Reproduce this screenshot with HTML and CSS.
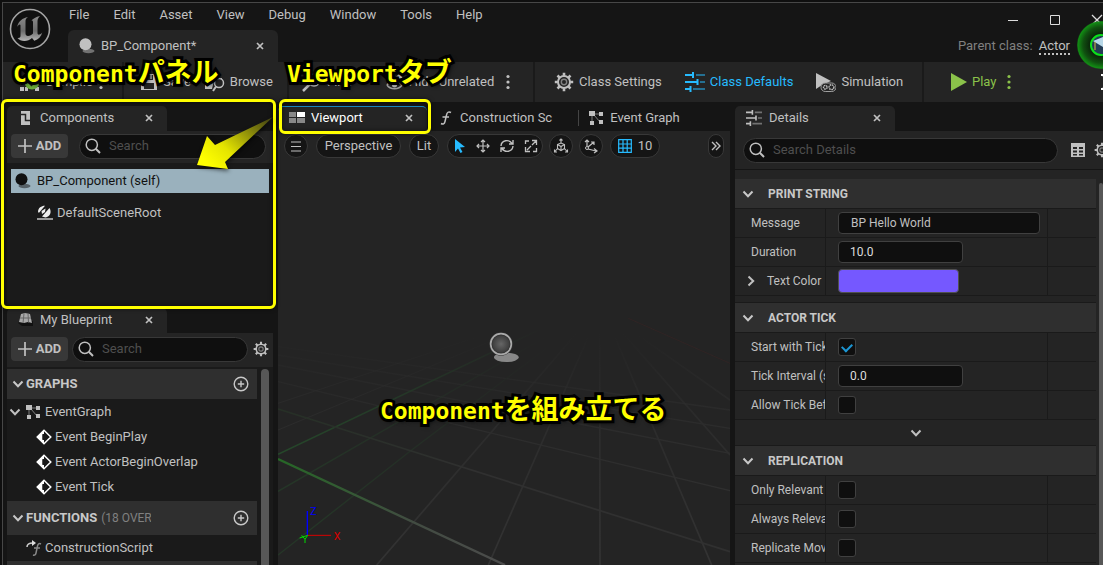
FILE: index.html
```html
<!DOCTYPE html>
<html lang="en">
<head>
<meta charset="utf-8">
<title>BP_Component</title>
<link rel="stylesheet" href="styles.css">
</head>
<body>
<svg class="defs" aria-hidden="true">
  <defs>
    <symbol id="gear" viewBox="0 0 20 20"><g fill="none" stroke="currentColor"><circle cx="10" cy="10" r="6" stroke-width="2"/><circle cx="10" cy="10" r="2.7" stroke-width="1.4" opacity=".6"/><path stroke-width="2.6" d="M10 .8v3M10 16.2v3M.8 10h3M16.2 10h3M3.5 3.5l2.1 2.1M14.4 14.4l2.1 2.1M3.5 16.500l2.1-2.1M14.4 5.600l2.1-2.1"/></g></symbol>
    <symbol id="sliders" viewBox="0 0 20 20"><g stroke="currentColor" stroke-width="2" fill="none"><path d="M0 3h8M8 0v6M0 10h12M12.500 7v6M0 17h5M5.500 14v6"/><path opacity=".5" d="M11 3h9M15 10h5M8 17h12"/></g></symbol>
    <symbol id="graph" viewBox="0 0 16 16"><path fill="currentColor" d="M1 1h6v5H1zM11 2h4v4h-4zM11 10h4v4h-4zM2 11h4v4H2z"/><path fill="none" stroke="currentColor" opacity=".6" d="M6 4h6M4 5v7M6 5l6 7"/></symbol>
    <symbol id="search" viewBox="0 0 16 16"><g fill="none" stroke="currentColor" stroke-width="1.5"><circle cx="6.800" cy="6.800" r="5.600"/><path stroke-width="2" d="M10.800 10.800l4.200 4.200"/></g></symbol>
    <symbol id="close" viewBox="0 0 8 8"><path fill="none" stroke="currentColor" stroke-width="1.700" d="M1 1l6 6M7 1L1 7"/></symbol>
    <symbol id="down" viewBox="0 0 12 12"><path fill="none" stroke="currentColor" stroke-width="2" d="M1.500 3.500L6 8.200l4.500-4.700"/></symbol>
    <symbol id="plus" viewBox="0 0 14 14"><path fill="none" stroke="currentColor" stroke-width="1.700" d="M7 0v14M0 7h14"/></symbol>
    <symbol id="pluscircle" viewBox="0 0 16 16"><g fill="none" stroke="currentColor" stroke-width="1.400"><circle cx="8" cy="8" r="6.800"/><path d="M8 4.800v6.400M4.800 8h6.400"/></g></symbol>
    <symbol id="sphere" viewBox="0 0 16 16"><ellipse cx="9.500" cy="13" rx="6" ry="2.200" fill="currentColor" opacity=".5"/><circle cx="6.500" cy="6.300" r="6" fill="currentColor"/></symbol>
    <symbol id="event" viewBox="0 0 16 16"><path fill="none" stroke="#fff" stroke-width="1.500" d="M8 1.200L14.800 8 8 14.800 1.200 8z"/><path fill="#fff" d="M8 1v4H6.500v6H8v4L1 8z"/><path fill="#1a1a1a" d="M6.500 5.500H8L10.500 8 8 10.500H6.500z"/></symbol>
    <symbol id="dots" viewBox="0 0 4 16"><g fill="currentColor"><circle cx="2" cy="2.500" r="1.600"/><circle cx="2" cy="8" r="1.600"/><circle cx="2" cy="13.500" r="1.600"/></g></symbol>
    <linearGradient id="ue" x1="0" y1="0" x2="0" y2="1"><stop offset="0" stop-color="#8a8a8a"/><stop offset=".6" stop-color="#6c6c6c"/><stop offset="1" stop-color="#b5b5b5"/></linearGradient>
  </defs>
</svg>

<div class="app">
  <header class="titlebar">
    <svg class="logo" viewBox="0 0 42 42"><circle cx="21" cy="21" r="19.500" fill="#101010" stroke="#a5a5a5" stroke-width="1.600"/><path fill="url(#ue)" d="M8 19c1.500-6 5.500-9 11-10-2 1.500-2.500 2.500-2.500 4v12.500c0 1.500 1 2.500 2.500 2.500 2 0 3.500-1 5-2.500V14c0-1-.8-1.800-1.800-1.300C24 10.500 27 9 31 8c-2 2-2.500 3.500-2.500 5.500V25c0 1.500 1 2 2 1.600 1.200-.5 2-1.200 2.800-2.200-1 4-4 7-8 8.300L23 30c-2 2-5 3-7.500 3-3 0-5.500-1-7-3 2 .3 3-.6 3-2.200V17.500c0-1.800-2-1.200-3.500 1.500z"/></svg>
    <div class="title-main">
      <nav class="menu" aria-label="Main menu">
        <button>File</button><button>Edit</button><button>Asset</button><button>View</button><button>Debug</button><button>Window</button><button>Tools</button><button>Help</button>
      </nav>
      <div class="asset-tab"><svg class="i16"><use href="#sphere"/></svg><span>BP_Component*</span><button class="x" aria-label="Close asset"><svg class="i8"><use href="#close"/></svg></button></div>
    </div>
    <div class="title-side">
      <div class="window-buttons">
        <button aria-label="Minimize"><svg viewBox="0 0 12 12" class="i12"><path stroke="currentColor" d="M1 6.500h10"/></svg></button>
        <button aria-label="Maximize"><svg viewBox="0 0 12 12" class="i12"><path fill="none" stroke="currentColor" d="M1.500 1.500h9v9h-9z"/></svg></button>
        <button aria-label="Close window"><svg viewBox="0 0 12 12" class="i12"><path stroke="currentColor" stroke-width="1.300" d="M1 1l10 10M11 1L1 11"/></svg></button>
      </div>
      <p class="parent">Parent class: <a href="#actor">Actor</a></p>
    </div>
  </header>

  <div class="toolbar">
    <div class="group g-compile">
      <button class="tool"><svg class="i20" viewBox="0 0 20 20"><path fill="#c0c0c0" d="M0 5h4v3H0zM0 10h4v3H0zM0 15h4v4H0zM5 15h3v4H5zM15 15h4v4h-4z"/><circle cx="12" cy="10" r="7.500" fill="#6cae3a"/><path fill="none" stroke="#182010" stroke-width="2.200" d="M8 9.500l3.500 3.500L18 6"/></svg>Compile</button>
      <button class="more" aria-label="Compile options"><svg class="idots"><use href="#dots"/></svg></button>
    </div>
    <div class="group g-save">
      <button class="tool"><svg class="i18" viewBox="0 0 18 18"><path fill="#c0c0c0" fill-rule="evenodd" d="M1 1h13l3 3v13H1zM5 2v5h8V2zM4 10v6h10v-6z"/><path fill="#888" d="M10 2h2v4h-2z"/></svg>Save</button>
      <button class="tool"><svg class="i20" viewBox="0 0 20 20"><path fill="#c0c0c0" d="M0 4h7l2 2h8v2H9l-2 9H0z"/><circle cx="14" cy="11" r="4.500" fill="#242424" stroke="#c0c0c0" stroke-width="1.500"/><path stroke="#c0c0c0" stroke-width="2" d="M11 14.500L8 19"/></svg>Browse</button>
    </div>
    <div class="group g-find">
      <button class="tool"><svg class="i20" viewBox="0 0 20 20"><circle cx="12" cy="8" r="6" fill="none" stroke="#c0c0c0" stroke-width="1.500"/><path stroke="#c0c0c0" stroke-width="2.500" d="M7.500 12.500L1 19"/></svg>Find</button>
      <div class="pair">
        <button class="tool"><svg class="i20" viewBox="0 0 20 20"><path fill="none" stroke="#a0a0a0" stroke-width="1.500" d="M3 4l5 4 8-5M3 13c3-5 12-5 15 0-3 5-12 5-15 0"/><circle cx="3" cy="4" r="2" fill="#777"/><circle cx="16" cy="4" r="2.500" fill="#c0c0c0"/><circle cx="10.500" cy="13" r="2.500" fill="#c0c0c0"/></svg>Hide Unrelated</button>
        <button class="more" aria-label="Hide options"><svg class="idots"><use href="#dots"/></svg></button>
      </div>
    </div>
    <div class="group g-class">
      <button class="tool"><svg class="i20"><use href="#gear"/></svg>Class Settings</button>
      <button class="tool active"><svg class="i20"><use href="#sliders"/></svg>Class Defaults</button>
      <button class="tool"><svg class="i20" viewBox="0 0 20 20"><path fill="#c0c0c0" d="M0 1l15 8-9 4-6 4z"/><rect x="5" y="11" width="15" height="8.500" rx="4.200" fill="#242424" stroke="#a0a0a0"/><g fill="none" stroke="#c0c0c0" stroke-width="1.400"><circle cx="9.300" cy="15.200" r="1.800" stroke-dasharray="1.500 .6"/><circle cx="15.500" cy="15.200" r="2.400" stroke-dasharray="1.500 .6"/></g></svg>Simulation</button>
    </div>
    <div class="group g-play">
      <button class="tool"><svg class="i18" viewBox="0 0 18 18"><path fill="#8bc24a" d="M2 0l16 9-16 9z"/></svg>Play</button>
      <button class="more" aria-label="Play options"><svg class="idots"><use href="#dots"/></svg></button>
    </div>
  </div>

  <main class="workspace">
    <aside class="left">
      <section class="panel components">
        <div class="tabs"><div class="tab"><svg class="i16" viewBox="0 0 16 16"><path fill="#c0c0c0" d="M3 1h9v14H3z"/><path fill="none" stroke="#242424" stroke-width="1.500" d="M3 4.500h4.500v6H12"/></svg><h2>Components</h2><button class="x" aria-label="Close Components"><svg class="i8"><use href="#close"/></svg></button></div></div>
        <div class="actions"><button class="add"><svg class="i14"><use href="#plus"/></svg>ADD</button><label class="search wide"><svg class="i16"><use href="#search"/></svg><input type="search" placeholder="Search" aria-label="Search components"></label></div>
        <ul class="tree">
          <li class="selected"><svg class="i16"><use href="#sphere"/></svg>BP_Component (self)</li>
          <li class="child"><svg class="i16" viewBox="0 0 16 16"><path fill="#999" d="M0 13h16v2H0z"/><path fill="#eee" d="M1 6.500C1.500 3 4 .8 8 .8L1.800 8zM5 11.500l7.500-8.500c2.500 4 .5 9-4 9.500z"/><path fill="#eee" d="M4.500 6l4-2.500L8 7l-3 2z"/></svg>DefaultSceneRoot</li>
        </ul>
      </section>
      <section class="panel blueprint">
        <div class="tabs"><div class="tab"><svg class="i16" viewBox="0 0 16 16"><path fill="#111" d="M0 11l3-2h12v5H4z"/><path fill="#a8a8a8" d="M3 2l4-1 5 1 2 9-4-1-4 1-5-1z"/><path stroke="#666" fill="none" d="M6 1.500L5 11M10 1.500l.5 9M2 6h11"/></svg><h2>My Blueprint</h2><button class="x" aria-label="Close My Blueprint"><svg class="i8"><use href="#close"/></svg></button></div></div>
        <div class="actions"><button class="add"><svg class="i14"><use href="#plus"/></svg>ADD</button><label class="search"><svg class="i16"><use href="#search"/></svg><input type="search" placeholder="Search" aria-label="Search blueprint"></label><button class="icon" aria-label="Blueprint settings"><svg class="i16"><use href="#gear"/></svg></button></div>
        <div class="outline">
          <div class="outline-list">
            <h3 class="graphs"><svg class="i12"><use href="#down"/></svg>GRAPHS<button class="icon" aria-label="Add graph"><svg class="i16"><use href="#pluscircle"/></svg></button></h3>
            <ul>
              <li class="root"><svg class="i12"><use href="#down"/></svg><svg class="i16"><use href="#graph"/></svg>EventGraph</li>
              <li class="leaf"><svg class="i16"><use href="#event"/></svg>Event BeginPlay</li>
              <li class="leaf"><svg class="i16"><use href="#event"/></svg>Event ActorBeginOverlap</li>
              <li class="leaf"><svg class="i16"><use href="#event"/></svg>Event Tick</li>
            </ul>
            <h3 class="functions"><svg class="i12"><use href="#down"/></svg>FUNCTIONS<span class="count">(18 OVERRIDABLE)</span><button class="icon" aria-label="Add function"><svg class="i16"><use href="#pluscircle"/></svg></button></h3>
            <ul><li class="func"><svg class="i16" viewBox="0 0 16 16"><path fill="none" stroke="#ccc" stroke-width="1.500" d="M1 7c0-3 2-4 6-4"/><path fill="#ddd" d="M6 0l4 3-4 3z"/><path fill="none" stroke="#888" stroke-width="1.500" d="M15 4c-2-1-3 0-3.500 2l-1.500 7c-.4 2-1.500 2.500-3 2M8 8h6"/></svg>ConstructionScript</li></ul>
            <h3 class="macros"></h3>
          </div>
          <div class="scroll"></div>
        </div>
      </section>
    </aside>

    <section class="center">
      <div class="tabs">
        <div class="tab current"><svg class="i16" viewBox="0 0 16 16"><path fill="#888" d="M0 2h7v5H0zM0 8h7v5H0zM8 8h8v5H8z"/><path fill="#fff" d="M8 2h8v5H8z"/></svg><h2>Viewport</h2><button class="x" aria-label="Close Viewport"><svg class="i8"><use href="#close"/></svg></button></div>
        <div class="tab idle script"><svg class="i14" viewBox="0 0 14 14"><path fill="none" stroke="currentColor" stroke-width="1.500" d="M12 1.500C9.500 0 8 1.500 7.500 4L6 10.500C5.500 13 4 13.700 2 12.500M3.500 6h6.500"/></svg><h2>Construction Sc</h2></div>
        <div class="tab idle event"><svg class="i16"><use href="#graph"/></svg><h2>Event Graph</h2></div>
      </div>
      <div class="viewport">
        <svg class="scene" viewBox="9 -507 1356 1302" preserveAspectRatio="xMidYMid slice" role="img" aria-label="3D scene">
          <defs>
            <linearGradient id="fade" gradientUnits="userSpaceOnUse" x1="0" y1="100" x2="0" y2="795"><stop offset="0" stop-color="#2c2c2c" stop-opacity="0"/><stop offset=".4" stop-color="#2c2c2c"/><stop offset="1" stop-color="#333"/></linearGradient>
            <linearGradient id="gaxis" gradientUnits="userSpaceOnUse" x1="9" y1="477" x2="690" y2="795"><stop offset="0" stop-color="#266826"/><stop offset=".6" stop-color="#424c42"/><stop offset="1" stop-color="#4c4c4c"/></linearGradient>
            <linearGradient id="gfar" gradientUnits="userSpaceOnUse" x1="9" y1="463" x2="800" y2="80"><stop offset="0" stop-color="#25482a"/><stop offset="1" stop-color="#242424"/></linearGradient>
            <linearGradient id="gcross" gradientUnits="userSpaceOnUse" x1="9" y1="327" x2="600" y2="500"><stop offset="0" stop-color="#263026"/><stop offset="1" stop-color="#303030"/></linearGradient>
            <radialGradient id="ball"><stop offset="0" stop-color="#666"/><stop offset="1" stop-color="#353535"/></radialGradient>
          </defs>
          <g fill="none" stroke="url(#fade)" stroke-width="5">
            <path d="M974 70L975 795M975 30L640 795M965 30L305 795M990 40L1310 795M1000 50L1365 465M1010 50L1365 300"/>
            <path d="M9 245L1365 572M9 195L1365 460M9 165L1365 385M9 140L1365 330" stroke-width="4"/>
            <path d="M9 310L760 60M9 390L800 60" stroke-width="3"/>
          </g>
          <g fill="none">
            <path d="M9 765L410 450 900 80" stroke="url(#gfar)" opacity=".5" stroke-width="4"/><path d="M9 574L900 60" stroke="url(#gfar)" opacity=".5" stroke-width="4"/>
            <path d="M9 463L875 50" stroke="url(#gfar)" stroke-width="5"/>
            <path d="M9 327L1365 755" stroke="url(#gcross)" stroke-width="5"/>
            <path d="M1060 55L1365 190" stroke="#302424" stroke-width="3"/>
            <path d="M9 477L690 795" stroke="url(#gaxis)" stroke-width="7"/>
          </g>
          <ellipse cx="694" cy="172" rx="37" ry="14" fill="#888"/><circle cx="678" cy="132" r="31" fill="url(#ball)" stroke="#333" stroke-width="9"/><circle cx="678" cy="132" r="31" fill="none" stroke="#aaa" stroke-width="5"/>
          <g fill="none" stroke-width="3"><path stroke="#00f" stroke-width="4" d="M97 633v73"/><path stroke="#d80000" d="M97 706h71"/><path stroke="#0d0" d="M98 706L74 714M80 706l10 12 8-12M90 718v11"/></g>
          <text class="axis z" x="106" y="646">Z</text><text class="axis x-label" x="176" y="720">X</text>
        </svg>
        <div class="view-tools">
          <button class="pill menu-btn" aria-label="Viewport menu"><svg class="i12" viewBox="0 0 12 12"><path stroke="currentColor" stroke-width="1.200" d="M1 2h10M1 6.500h10M1 11h10"/></svg></button>
          <button class="pill persp">Perspective</button>
          <button class="pill lit">Lit</button>
          <div class="pill tools">
            <button aria-label="Select"><svg class="i14" viewBox="0 0 14 14"><path fill="#26bbff" d="M3 0l10 8-5 .5 2.500 4.500-2 1L6 9.500 3 13z"/></svg></button>
            <button aria-label="Move"><svg class="i14" viewBox="0 0 14 14"><path fill="none" stroke="currentColor" stroke-width="1.200" d="M7 1v12M1 7h12M5 3l2-2 2 2M5 11l2 2 2-2M3 5L1 7l2 2M11 5l2 2-2 2"/></svg></button>
            <button aria-label="Rotate"><svg class="i14" viewBox="0 0 14 14"><path fill="none" stroke="currentColor" stroke-width="1.400" d="M1 7c.5-6 8-7 11-2.500M13 7c-.5 6-8 7-11 2.500M13 1v4H9M1 13V9h4"/></svg></button>
            <button aria-label="Scale"><svg class="i14" viewBox="0 0 14 14"><path fill="none" stroke="currentColor" stroke-width="1.300" d="M5 2H1.500v3M12.500 9v3.500H9M8 1.500h4.500V6M12 2L8 6M7 7L3 11M1.500 8v4.500H6"/></svg></button>
          </div>
          <button class="pill round coord" aria-label="Coordinate system"><svg class="i16" viewBox="0 0 16 16"><path fill="none" stroke="currentColor" stroke-width="1.100" d="M8 1v4M4.500 6.500L8 5l3.500 1.500v4L8 12.500l-3.500-2zM4.500 6.500L8 8.500l3.500-2M8 8.500v4M4.500 10.500L1.500 14M11.500 10.500l3 3.500M6.500 2.500L8 1l1.500 1.500M1.500 11.500V14H4M14.500 11.500V14H12"/></svg></button>
          <button class="pill round snap" aria-label="Surface snapping"><svg class="i16" viewBox="0 0 16 16"><path fill="none" stroke="currentColor" stroke-width="1.200" d="M4 2v6M5 9l6-5M2 4l2-2 2 2M8 4h3v3M5 11l8 2M11 10.500l3 2.500-3 2"/><circle cx="4" cy="10" r="1.500" fill="#151515" stroke="currentColor"/></svg></button>
          <button class="pill gridsnap"><svg class="i14" viewBox="0 0 14 14"><path fill="none" stroke="#26bbff" stroke-width="1.200" d="M.7.7h12.600v12.600H.7zM5 0v14M9.200 0v14M0 5h14M0 9.200h14"/></svg>10</button>
          <button class="pill expand" aria-label="More tools"><svg class="i12" viewBox="0 0 12 12"><path fill="none" stroke="currentColor" stroke-width="1.400" d="M2 2l4 4-4 4M6 2l4 4-4 4"/></svg></button>
        </div>
      </div>
    </section>

    <aside class="right">
      <div class="tabs"><div class="tab"><svg class="i16"><use href="#sliders"/></svg><h2>Details</h2><button class="x" aria-label="Close Details"><svg class="i8"><use href="#close"/></svg></button></div></div>
      <div class="details-search"><label class="search"><svg class="i16"><use href="#search"/></svg><input type="search" placeholder="Search Details" aria-label="Search Details"></label>
        <button class="icon" aria-label="Property matrix"><svg class="i14" viewBox="0 0 14 14"><path fill="#c0c0c0" fill-rule="evenodd" d="M0 0h14v14H0zM2 4v2h4V4zM8 4v2h4V4zM2 7.500v2h4v-2zM8 7.500v2h4v-2zM2 11v1.500h4V11zM8 11v1.500h4V11z"/></svg></button>
        <button class="icon" aria-label="Details settings"><svg class="i16"><use href="#gear"/></svg></button></div>
      <div class="details-body">
        <div class="props">
          <h3><svg class="i12"><use href="#down"/></svg>PRINT STRING</h3>
          <div class="row"><label for="msg">Message</label><div class="value"><input id="msg" class="text" value="BP Hello World"></div><i></i></div>
          <div class="row"><label for="dur">Duration</label><div class="value"><input id="dur" class="number" value="10.0"></div><i></i></div>
          <div class="row"><div class="name"><svg class="i12 right-arrow"><use href="#down"/></svg>Text Color</div><div class="value"><button class="swatch" aria-label="Text Color"></button></div><i></i></div>
          <div class="spacer"></div>
          <h3><svg class="i12"><use href="#down"/></svg>ACTOR TICK</h3>
          <div class="row"><label for="tick">Start with Tick Enabled</label><div class="value"><input type="checkbox" id="tick" checked></div><i></i></div>
          <div class="row"><label for="int">Tick Interval (secs)</label><div class="value"><input id="int" class="number" value="0.0"></div><i></i></div>
          <div class="row"><label for="allow">Allow Tick Before Begin Play</label><div class="value"><input type="checkbox" id="allow"></div><i></i></div>
          <button class="advanced" aria-label="Show advanced"><svg class="i12"><use href="#down"/></svg></button>
          <h3><svg class="i12"><use href="#down"/></svg>REPLICATION</h3>
          <div class="row"><label for="only">Only Relevant to Owner</label><div class="value"><input type="checkbox" id="only"></div><i></i></div>
          <div class="row"><label for="always">Always Relevant</label><div class="value"><input type="checkbox" id="always"></div><i></i></div>
          <div class="row"><label for="move">Replicate Movement</label><div class="value"><input type="checkbox" id="move"></div><i></i></div>
          <div class="row"></div>
        </div>
        <div class="scroll"></div>
      </div>
    </aside>
  </main>

  <svg class="badge" viewBox="0 0 48 48" aria-hidden="true"><defs><radialGradient id="glow"><stop offset=".45" stop-color="#0a250a"/><stop offset=".75" stop-color="#105010"/><stop offset=".96" stop-color="#128c14"/><stop offset="1" stop-color="#128c14" stop-opacity=".5"/></radialGradient></defs><circle cx="24" cy="24" r="24" fill="url(#glow)"/><circle cx="24" cy="24" r="10" fill="#243c54" stroke="#0be01b" stroke-width="2"/><path fill="#b8d8e8" d="M16 20l10-4v10z"/><path stroke="#d8b840" d="M18 21v8"/></svg>
  <svg class="pointer" viewBox="0 0 12 16" aria-hidden="true"><path fill="none" stroke="#fff" stroke-width="2" d="M0 1h2l2 3v8l-2 3H0"/></svg>
</div>

<div class="outline-box box-components"></div>
<div class="outline-box box-viewport"></div>
<svg class="arrow" viewBox="0 0 80 60" aria-hidden="true"><defs><linearGradient id="ag" x1="1" y1="0" x2="0" y2=".7"><stop offset="0" stop-color="#3a3a14"/><stop offset=".3" stop-color="#80800c"/><stop offset=".7" stop-color="#e4e400"/><stop offset="1" stop-color="#ff0"/></linearGradient></defs><path fill="url(#ag)" d="M78 3L20 31 12 22 2 51 33 55 30 48z"/></svg>
<p class="callout c1">Component<span>パネル</span></p>
<p class="callout c2">Viewport<span>タブ</span></p>
<p class="callout c3">Component<span>を組み立てる</span></p>
</body>
</html>
```

FILE: styles.css
```css
* { box-sizing: border-box; }
body { margin: 0; padding: 2px 0 0 2px; height: 100vh; overflow: hidden; background: #0f0f0f; color: #c0c0c0; font: 13px/16px Roboto, "Noto Sans CJK JP", sans-serif; }
button { background: none; border: 0; padding: 0; color: inherit; font: inherit; white-space: nowrap; }
h2, h3, p, ul { margin: 0; padding: 0; font: inherit; list-style: none; }
svg { display: block; flex: none; }
input { font: inherit; color: inherit; }
.defs { position: absolute; width: 0; height: 0; }
.i8 { width: 8px; height: 8px; }
.i12 { width: 12px; height: 12px; }
.i14 { width: 14px; height: 14px; }
.i16 { width: 16px; height: 16px; }
.i18 { width: 18px; height: 18px; }
.i20 { width: 20px; height: 20px; }
.idots { width: 4px; height: 16px; }

.app { position: relative; display: flex; flex-direction: column; height: 100%; overflow: hidden; background: #151515; border: solid #474747; border-width: 1px 0 0 1px; }

.titlebar { display: flex; height: 59px; flex: none; }
.logo { width: 42px; height: 42px; margin: 5px 17px 0 6px; }
.title-main { flex: 1; display: flex; flex-direction: column; justify-content: space-between; }
.menu { display: flex; gap: 24px; padding: 4px 0 0 1px; }
.asset-tab { display: flex; align-items: center; width: 210px; height: 32px; padding: 0 14px 0 11px; gap: 6px; background: #242424; border-radius: 6px 6px 0 0; }
.x { margin-left: auto; }
.title-side { display: flex; flex-direction: column; justify-content: space-between; padding-bottom: 8px; }
.window-buttons { display: flex; gap: 30px; padding-top: 11px; justify-content: flex-end; color: #ddd; }
.parent { padding-right: 33px; color: #808080; }
.parent a { color: #c0c0c0; text-decoration: none; border-bottom: 2px dotted #c0c0c0; margin-left: 3px; }

.toolbar { display: flex; height: 40px; flex: none; background: #242424; }
.group { display: flex; align-items: center; gap: 23px; border-right: 2px solid #1a1a1a; white-space: nowrap; }
.tool { display: flex; align-items: center; gap: 5px; }
.active { color: #26bbff; }
.pair { display: flex; gap: 12px; }
.g-compile { padding-left: 17px; gap: 6px; width: 121px; }
.g-save { padding-left: 16px; gap: 14px; width: 165px; }
.g-find { padding-left: 13px; gap: 32px; width: 246px; }
.g-class { padding-left: 19px; width: 389px; }
.g-play { flex: 1; padding-left: 25px; gap: 10px; border: 0; color: #8bc24a; }

.workspace { flex: 1; min-height: 0; display: grid; grid-template-columns: 266px 1fr 368px; gap: 5px; padding: 4px 0 0 4px; }
.left, .center, .right { min-width: 0; min-height: 0; display: flex; flex-direction: column; overflow: hidden; }
.tabs { display: flex; flex: none; height: 25px; background: #151515; }
.tab { display: flex; align-items: center; width: 160px; padding: 0 14px 2px 11px; gap: 6px; background: #242424; border-radius: 5px 5px 0 0; }
.actions { display: flex; align-items: center; height: 34px; padding: 0 4px 2px; background: #242424; border-bottom: 2px solid #1a1a1a; }
.add { display: flex; align-items: center; justify-content: center; gap: 4px; width: 57px; height: 24px; margin-right: 5px; background: #383838; border-radius: 4px; font-weight: 700; }
.search { display: flex; align-items: center; flex: 1; min-width: 0; height: 25px; padding: 0 5px; gap: 8px; background: #0f0f0f; border: 1px solid #383838; border-radius: 13px; }
.search input { flex: 1; min-width: 0; padding: 0 0 1px; background: none; border: 0; outline: 0; }
.search input::placeholder { color: #4e4e4e; }
.search.wide { margin: 0 3px 0 6px; }
.icon { margin-left: 5px; }

.components { height: 202px; flex: none; background: #1a1a1a; }
.tree { padding: 4px; }
.tree li { display: flex; align-items: center; gap: 6px; height: 24px; padding-left: 4px; }
.tree .selected { background: #9ab1bd; color: #111; }
.tree .child { height: 32px; margin-top: 4px; padding-left: 26px; gap: 4px; }
.blueprint { flex: 1; min-height: 0; display: flex; flex-direction: column; background: #1a1a1a; }
.blueprint .actions { height: 36px; flex: none; }
.blueprint .add { margin-right: 4px; }
.outline { display: flex; flex: 1; min-height: 0; overflow: hidden; gap: 4px; }
.outline-list { width: 250px; }
.outline .scroll { width: 8px; background: #575757; border-radius: 4px 4px 0 0; }
h3 { display: flex; align-items: center; background: #2f2f2f; font-weight: 700; color: #c8c8c8; }
.outline h3 { padding: 0 8px 0 5px; gap: 2px; height: 30px; }
.outline h3 .icon { margin-left: auto; }
.outline h3.functions { height: 34px; margin-top: 2px; }
.count { width: 50px; margin-left: 2px; overflow: hidden; white-space: nowrap; font-weight: 400; font-size: 12px; color: #808080; }
.outline li { display: flex; align-items: center; height: 25px; gap: 3px; }
.root { padding-left: 2px; }
.outline .root { gap: 4px; }
.leaf { padding-left: 29px; }
.func { padding-left: 19px; }
.outline .func { height: 26px; }

.center .tab.current { width: 149px; padding-right: 14px; color: #fff; border-top: 1px solid #1a88c0; }
.center .tab.current .x { color: #c0c0c0; }
.center .idle { background: none; width: auto; white-space: nowrap; }
.center .script { padding: 0 26px 2px 12px; gap: 7px; }
.center .event { padding-left: 9px; gap: 6px; border-left: 1px solid #444; border-radius: 0; height: 16px; margin-top: 4px; padding-bottom: 0; }
.viewport { position: relative; flex: 1; min-height: 0; background: #242424; }
.scene { position: absolute; inset: 0; width: 100%; height: 100%; }
.axis { font: 32px Roboto, sans-serif; }
.z { fill: #00f; }
.x-label { fill: #d80000; }
.view-tools { position: relative; display: flex; align-items: center; gap: 8px; padding: 3px 6px; }
.pill { display: flex; align-items: center; justify-content: center; height: 24px; background: #151515; border: 1px solid #383838; border-radius: 12px; }
.menu-btn, .round { width: 24px; }
.persp { width: 85px; }
.lit { width: 30px; }
.tools { width: 96px; gap: 10px; }
.gridsnap { width: 50px; gap: 6px; }
.coord { margin: 0 -2px; }
.snap { margin-right: -1px; }
.expand { width: 16px; margin-left: auto; }

.right { background: #242424; }
.right .tab { gap: 7px; }
.details-search { display: flex; align-items: center; flex: none; height: 39px; padding: 0 0 0 8px; border-bottom: 1px solid #151515; }
.details-search .search { flex: none; width: 315px; }
.details-search .icon { margin-left: 13px; }
.details-search .icon + .icon { margin-left: 9px; }
.details-body { display: flex; gap: 3px; padding-top: 9px; }
.props { width: 363px; font-size: 12px; }
.right .scroll { width: 4px; margin-top: 4px; background: #575757; border-radius: 2px; }
.props h3 { height: 30px; padding-left: 7px; gap: 14px; border-bottom: 1px solid #1a1a1a; }
.row { display: grid; grid-template-columns: 91px 222px 1fr; height: 29px; border-bottom: 1px solid #1a1a1a; }
.row > label, .name { overflow: hidden; white-space: nowrap; padding-left: 16px; line-height: 28px; border-right: 1px solid #1a1a1a; }
.name { display: flex; align-items: center; padding-left: 10px; gap: 10px; }
.right-arrow { transform: rotate(-90deg); }
.value { display: flex; align-items: center; padding-left: 12px; border-right: 1px solid #1a1a1a; }
.text, .number { width: 202px; height: 22px; padding: 0 12px; background: #0f0f0f; border: 1px solid #404040; border-radius: 4px; }
.number { width: 125px; padding-left: 11px; color: #ddd; }
.swatch { width: 121px; height: 24px; background: #7558ff; border: 1px solid #505050; border-radius: 4px; }
.spacer { height: 7px; border-bottom: 1px solid #1a1a1a; }
input[type="checkbox"] { appearance: none; display: grid; place-items: center; width: 18px; height: 18px; margin: 0; background: #0f0f0f; border: 1px solid #404040; border-radius: 3px; }
input[type="checkbox"]:checked::before { content: ""; width: 8px; height: 5px; border: solid #1c96d4; border-width: 0 0 2px 2px; transform: translateY(-1px) rotate(-45deg); }
.advanced { display: flex; align-items: center; justify-content: center; width: 100%; height: 26px; border-bottom: 1px solid #1a1a1a; }

.badge { position: absolute; right: -22px; top: 18px; width: 48px; height: 48px; }
.pointer { position: absolute; right: -10px; top: 71px; width: 12px; height: 16px; }
.outline-box { position: absolute; border: 3px solid #ff0; border-radius: 6px; box-shadow: 0 0 4px #0008, inset 0 0 5px #0008; }
.box-components { left: 1px; top: 99px; width: 275px; height: 210px; }
.box-viewport { left: 279px; top: 99px; width: 152px; height: 35px; }
.arrow { position: absolute; left: 195px; top: 114px; width: 80px; height: 60px; filter: drop-shadow(1px 2px 2px #0009); }
.callout { position: absolute; white-space: nowrap; color: #ff0; font: 700 23px/30px "DejaVu Sans Mono", monospace; -webkit-text-stroke: 6px #000; paint-order: stroke fill; text-shadow: 2px 2px 5px #000; }
.callout span { font: 700 27px/30px "Noto Sans CJK JP", sans-serif; }
.c1 { left: 13px; top: 56px; }
.c2 { left: 287px; top: 56px; }
.c3 { left: 380px; top: 393px; }
```
